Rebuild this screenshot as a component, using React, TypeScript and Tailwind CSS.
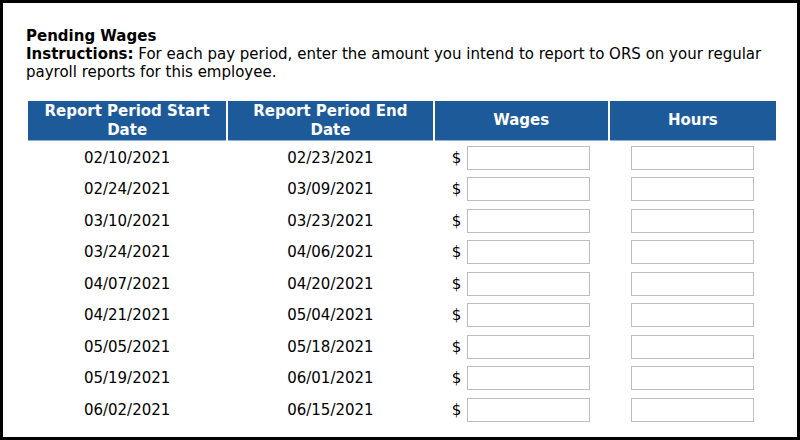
import React from 'react';

type Period = { start: string; end: string };

const PERIODS: Period[] = [
  { start: '02/10/2021', end: '02/23/2021' },
  { start: '02/24/2021', end: '03/09/2021' },
  { start: '03/10/2021', end: '03/23/2021' },
  { start: '03/24/2021', end: '04/06/2021' },
  { start: '04/07/2021', end: '04/20/2021' },
  { start: '04/21/2021', end: '05/04/2021' },
  { start: '05/05/2021', end: '05/18/2021' },
  { start: '05/19/2021', end: '06/01/2021' },
  { start: '06/02/2021', end: '06/15/2021' },
];

const headCell =
  'bg-[#1d5a9a] text-white font-bold text-center align-middle leading-[19px] border-b border-[#8fb0d8] p-0';

const inputCls = 'w-[123px] h-[24px] border border-[#bdbdbd] bg-white outline-none';

const App: React.FC = () => {
  return (
    <div className="w-[800px] h-[440px] bg-white border-[3px] border-black overflow-hidden font-['DejaVu_Sans',Verdana,sans-serif] text-black text-[15px]">
      <div className="pl-[23px] pt-[24px]">
        <h2 className="font-bold leading-[18px]">Pending Wages</h2>
        <p className="leading-[18px] pr-6">
          <b>Instructions:</b> For each pay period, enter the amount you intend to report to ORS on your regular payroll reports for this employee.
        </p>

        <table className="mt-[18px] border-separate border-spacing-[2px] w-[752px] table-fixed">
          <colgroup>
            <col className="w-[198px]" />
            <col className="w-[204px]" />
            <col className="w-[173px]" />
            <col className="w-[166px]" />
          </colgroup>
          <thead>
            <tr className="h-[40px]">
              <th className={headCell}>Report Period Start<br />Date</th>
              <th className={headCell}>Report Period End<br />Date</th>
              <th className={headCell}>Wages</th>
              <th className={headCell}>Hours</th>
            </tr>
          </thead>
          <tbody>
            {PERIODS.map((p) => (
              <tr key={p.start} className="h-[29.5px]">
                <td className="text-center p-0">{p.start}</td>
                <td className="text-center p-0">{p.end}</td>
                <td className="p-0">
                  <div className="flex items-center justify-center gap-[6px]">
                    <span>$</span>
                    <input type="text" className={inputCls} />
                  </div>
                </td>
                <td className="p-0">
                  <div className="flex justify-center">
                    <input type="text" className={inputCls} />
                  </div>
                </td>
              </tr>
            ))}
          </tbody>
        </table>
      </div>
    </div>
  );
};

export default App;
